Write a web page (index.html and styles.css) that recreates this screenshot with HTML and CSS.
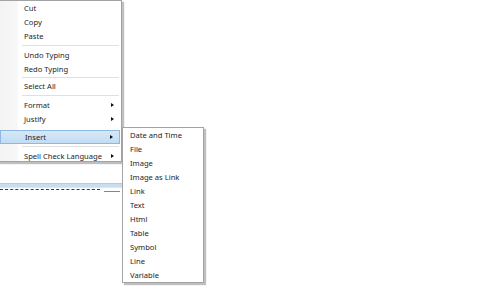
FILE: index.html
```html
<!DOCTYPE html>
<html>
<head>
    <meta charset="utf-8">
    <title>Context menu</title>
    <link rel="stylesheet" href="styles.css">
</head>
<body>
<div class="editor">
    <div class="editor-line">
        <div class="line-band"></div>
        <div class="line-text"><span class="dash"></span><span class="link"></span></div>
    </div>
</div>

<div class="menu main">
    <div class="item">Cut</div>
    <div class="item">Copy</div>
    <div class="item">Paste</div>
    <div class="sep"></div>
    <div class="item">Undo Typing</div>
    <div class="item">Redo Typing</div>
    <div class="sep small"></div>
    <div class="item">Select All</div>
    <div class="sep"></div>
    <div class="item sub">Format</div>
    <div class="item sub">Justify</div>
    <div class="gap"></div>
    <div class="item sub active">Insert</div>
    <div class="sep"></div>
    <div class="item sub">Spell Check Language</div>
</div>

<div class="menu insert">
    <div class="item">Date and Time</div>
    <div class="item">File</div>
    <div class="item">Image</div>
    <div class="item">Image as Link</div>
    <div class="item">Link</div>
    <div class="item">Text</div>
    <div class="item">Html</div>
    <div class="item">Table</div>
    <div class="item">Symbol</div>
    <div class="item">Line</div>
    <div class="item">Variable</div>
</div>
</body>
</html>
```

FILE: styles.css
```css
html, body {
    margin: 0;
    padding: 0;
    background: #ffffff;
}
body {
    width: 490px;
    height: 306px;
    overflow: hidden;
    position: relative;
    font-family: "Noto Sans", "Open Sans", sans-serif;
    font-size: 7.6px;
    color: #1e1e1e;
}

/* text underneath the menus */
.editor {
    padding-top: 183px;
}
.editor-line {
    width: 124px;
}
.line-band {
    height: 3px;
    background: #c6ddf2;
    border-top: 1px solid #aecbe8;
    border-bottom: 1px solid #d8e7f5;
}
.line-text {
    display: flex;
    align-items: flex-start;
    height: 4px;
    padding-top: 1px;
}
.dash {
    width: 100px;
    height: 1px;
    border-top: 1px dashed #2f3c4c;
}
.link {
    width: 16px;
    height: 1px;
    margin-left: 4px;
    margin-top: 2px;
    background: #5b8fc7;
}

/* menus */
.menu {
    position: absolute;
    background: #ffffff;
    border: 1px solid #a3a3a3;
    box-shadow: 2px 2px 1px rgba(0, 0, 0, 0.25);
    box-sizing: border-box;
}
.menu.main {
    left: -2px;
    top: 0;
    width: 124px;
    height: 162px;
    background: linear-gradient(to right, #f3f3f3 0, #f7f7f7 18px, #ffffff 20px);
}
.menu.insert {
    left: 122px;
    top: 127px;
    width: 82px;
    height: 156px;
}
.item {
    height: 14px;
    line-height: 15px;
    padding-left: 25px;
    position: relative;
    white-space: nowrap;
    box-sizing: border-box;
}
.insert .item {
    padding-left: 7px;
}
.item.sub::after {
    content: "";
    position: absolute;
    right: 7px;
    top: 5px;
    border-left: 3px solid #111111;
    border-top: 2.5px solid transparent;
    border-bottom: 2.5px solid transparent;
}
.item.active {
    margin: 0 1px;
    padding-left: 24px;
    background: linear-gradient(to bottom, #d6e8f8, #c2dcf3);
    border: 1px solid #8fb8e0;
    line-height: 13px;
}
.item.active::after {
    right: 6px;
    top: 4px;
}
.sep {
    height: 5px;
    display: flex;
    align-items: center;
    padding-left: 23px;
    padding-right: 2px;
}
.sep::before {
    content: "";
    flex: 1;
    height: 1px;
    background: #e0e0e0;
    border-bottom: 1px solid #ffffff;
}
.sep.small {
    height: 3px;
}
.gap {
    height: 4px;
}
```
